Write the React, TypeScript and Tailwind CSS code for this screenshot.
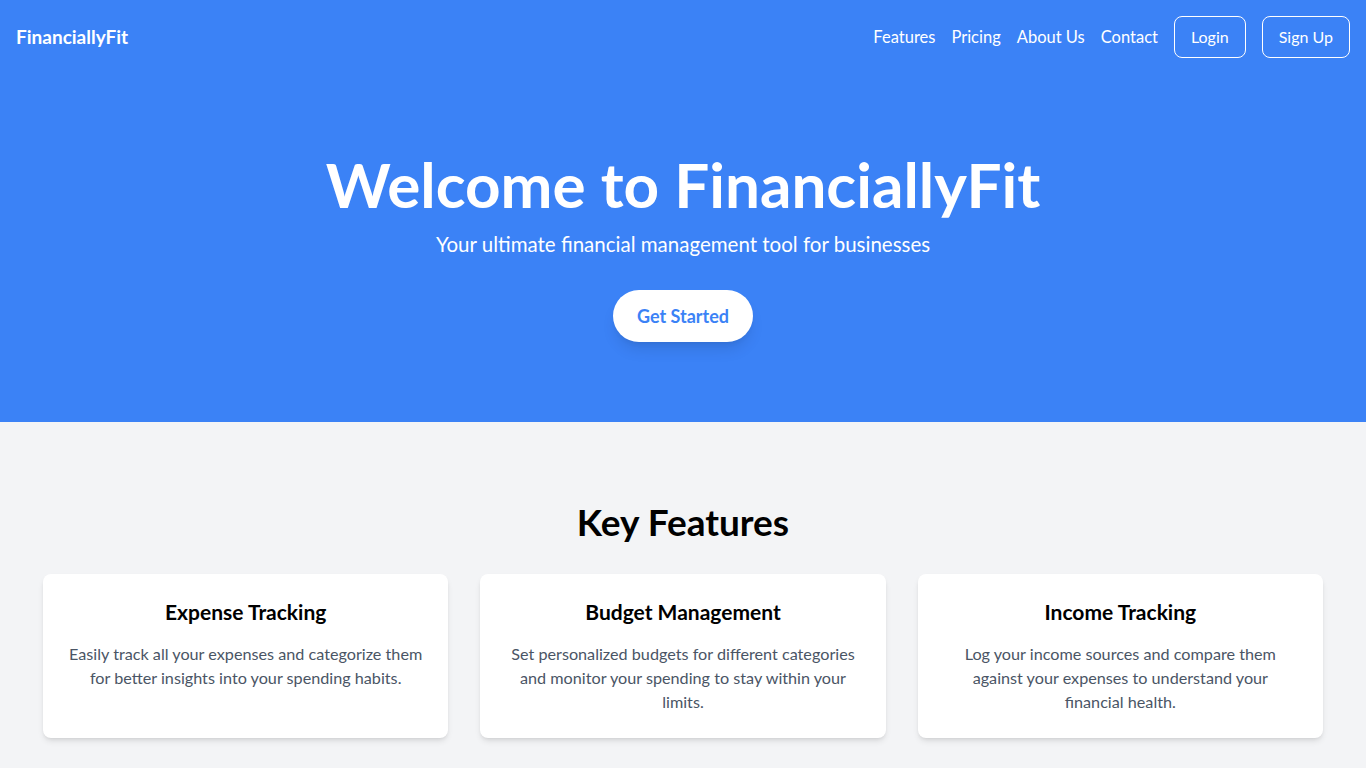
const features = [
  {
    title: "Expense Tracking",
    body: "Easily track all your expenses and categorize them for better insights into your spending habits.",
  },
  {
    title: "Budget Management",
    body: "Set personalized budgets for different categories and monitor your spending to stay within your limits.",
  },
  {
    title: "Income Tracking",
    body: "Log your income sources and compare them against your expenses to understand your financial health.",
  },
];

export default function App() {
  return (
    <div className="min-h-screen bg-gray-100 font-['Lato',sans-serif]">
      <header className="bg-[#3b82f6] text-white">
        <nav className="flex items-center justify-between p-4">
          <div className="text-[19px] leading-7 font-bold">FinanciallyFit</div>
          <div className="flex items-center gap-4 text-base leading-6">
            <a href="#" className="text-[16.5px]">Features</a>
            <a href="#" className="text-[16.5px]">Pricing</a>
            <a href="#" className="text-[16.5px]">About Us</a>
            <a href="#" className="text-[16.5px]">Contact</a>
            <button className="rounded-lg border border-white px-4 py-2">Login</button>
            <button className="rounded-lg border border-white px-4 py-2">Sign Up</button>
          </div>
        </nav>
        <section className="py-20 text-center">
          <h1 className="text-[62px] leading-[60px] font-bold">Welcome to FinanciallyFit</h1>
          <p className="mt-4 text-[20.5px] leading-7">Your ultimate financial management tool for businesses</p>
          <button className="mt-8 rounded-full bg-white px-6 py-3 text-lg leading-7 font-bold text-[#3b82f6] shadow-lg">
            Get Started
          </button>
        </section>
      </header>

      <section className="py-20">
        <div className="mx-auto max-w-[1280px]">
          <h2 className="mb-8 text-center text-[37px] leading-10 font-bold">Key Features</h2>
          <div className="grid grid-cols-3 gap-8">
            {features.map((f) => (
              <div key={f.title} className="rounded-lg bg-white p-6 text-center shadow-md">
                <h3 className="mb-4 text-[21px] leading-7 font-bold">{f.title}</h3>
                <p className="text-[16.2px] leading-6 text-gray-600">{f.body}</p>
              </div>
            ))}
          </div>
        </div>
      </section>
    </div>
  );
}
